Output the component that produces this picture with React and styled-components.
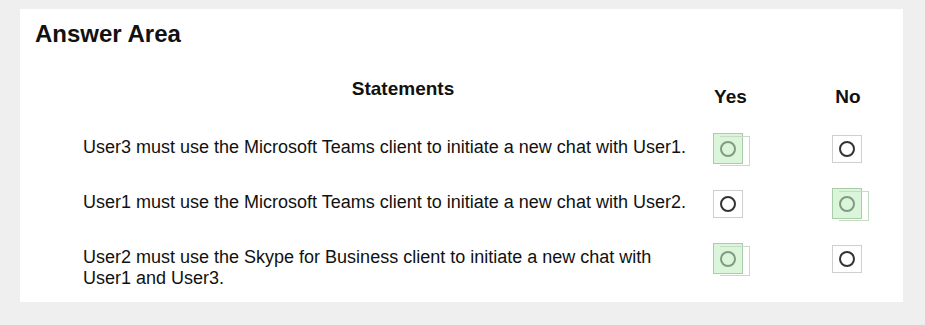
import React from 'react'
import styled, { createGlobalStyle } from 'styled-components'

const GlobalStyle = createGlobalStyle`
  body {
    margin: 0;
    background-color: #efefef;
    font-family: "Liberation Sans", Arial, sans-serif;
    color: #111;
  }
`

const Panel = styled.div`
  background-color: #fff;
  width: 883px;
  height: 293px;
  box-sizing: border-box;
  margin: 9px 0 0 20px;
  padding: 11px 0 11px 15px;
`

const Title = styled.h1`
  margin: 0;
  font-size: 24px;
  font-weight: 700;
  color: #111;
`

const Table = styled.div`
  display: flex;
  flex-direction: column;
  gap: 24px;
  margin-top: 26px;
  padding-left: 48px;
`

const Row = styled.div`
  display: flex;
  align-items: flex-start;
`

const HeaderRow = styled(Row)`
  margin-bottom: 1px;
`

const StatementHead = styled.div`
  width: 615px;
  box-sizing: border-box;
  padding: 4px 0 0 25px;
  text-align: center;
  font-size: 19px;
  font-weight: 700;
`

const Statement = styled.div`
  width: 615px;
  box-sizing: border-box;
  padding: 4px 8px 0 0;
  font-size: 18px;
  line-height: 21px;
`

const Choices = styled.div`
  display: flex;
  gap: 59px;
`

const ChoiceHead = styled.div`
  width: 60px;
  padding-top: 12px;
  padding-left: ${p => p.$shift}px;
  box-sizing: border-box;
  text-align: center;
  font-size: 19px;
  font-weight: 700;
`

const Cell = styled.div`
  width: 60px;
  display: flex;
  justify-content: center;
`

const Box = styled.div`
  position: relative;
  width: 30px;
  height: ${p => (p.$selected ? 31 : 28)}px;
  margin-top: ${p => (p.$selected ? 0 : 2)}px;
  box-sizing: border-box;
  display: flex;
  align-items: center;
  justify-content: center;
  background-color: ${p => (p.$selected ? '#daf5da' : '#fff')};
  border: 1px solid ${p => (p.$selected ? '#a9cca9' : '#cfcfcf')};

  &::after {
    content: '';
    display: ${p => (p.$selected ? 'block' : 'none')};
    position: absolute;
    left: 6px;
    top: 2px;
    width: 29px;
    height: 28px;
    border: 1px solid #c3dcc3;
    border-left: none;
  }
`

const Ring = styled.span`
  width: 12px;
  height: 12px;
  border-radius: 50%;
  border: 2px solid ${p => (p.$selected ? '#7f9c80' : '#333')};
`

const statements = [
  { text: 'User3 must use the Microsoft Teams client to initiate a new chat with User1.', answer: 'yes' },
  { text: 'User1 must use the Microsoft Teams client to initiate a new chat with User2.', answer: 'no' },
  { text: 'User2 must use the Skype for Business client to initiate a new chat with User1 and User3.', answer: 'yes' },
]

const Choice = ({ selected }) => (
  <Cell>
    <Box $selected={selected}>
      <Ring $selected={selected} />
    </Box>
  </Cell>
)

const App = () => {
  return (
    <>
      <GlobalStyle />
      <Panel>
        <Title>Answer Area</Title>
        <Table>
          <HeaderRow>
            <StatementHead>Statements</StatementHead>
            <Choices>
              <ChoiceHead $shift={5}>Yes</ChoiceHead>
              <ChoiceHead $shift={2}>No</ChoiceHead>
            </Choices>
          </HeaderRow>
          {statements.map((s, i) => (
            <Row key={i}>
              <Statement>{s.text}</Statement>
              <Choices>
                <Choice selected={s.answer === 'yes'} />
                <Choice selected={s.answer === 'no'} />
              </Choices>
            </Row>
          ))}
        </Table>
      </Panel>
    </>
  )
}

export default App
